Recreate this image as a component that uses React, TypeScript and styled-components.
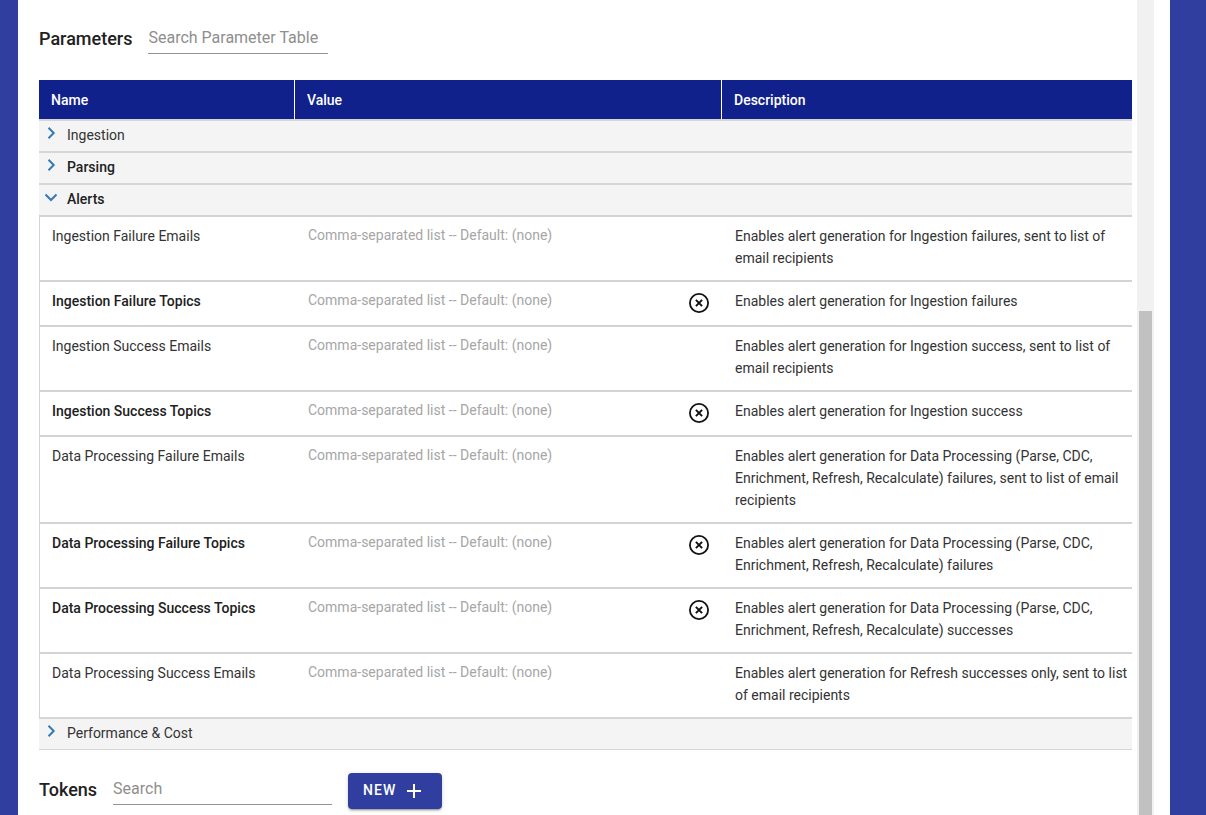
import React, { useState } from 'react';
import styled, { createGlobalStyle } from 'styled-components';

const GlobalStyle = createGlobalStyle`
  *, *::before, *::after { box-sizing: border-box; }
  body {
    margin: 0;
    background: #303f9f;
    color: #212121;
    font-family: Roboto, "Liberation Sans", sans-serif;
    font-size: 14px;
    line-height: 22px;
  }
  button, input { font: inherit; color: inherit; }
`;

const Page = styled.div`
  display: flex;
  min-height: 100vh;
  padding: 0 36px 0 18px;
`;

const Panel = styled.div`
  display: flex;
  flex: 1;
  min-width: 0;
  padding-right: 16px;
  background: #fff;
`;

const Content = styled.main`
  flex: 1;
  min-width: 0;
  padding: 20px 5px 6px 21px;
`;

const ScrollTrack = styled.div`
  display: flex;
  flex-direction: column;
  width: 17px;
  padding: 311px 2px 0;
  background: #f1f1f1;
`;

const ScrollThumb = styled.div`
  flex: 1;
  background: #c1c1c1;
`;

const SectionBar = styled.div`
  display: flex;
  align-items: flex-start;
  gap: 16px;
`;

const Title = styled.h2`
  margin: 0;
  padding-top: 7px;
  font-size: 18px;
  line-height: 24px;
  font-weight: 500;
`;

const SearchField = styled.input<{ $width: number }>`
  width: ${(p) => p.$width}px;
  height: 34px;
  padding: 2px 0 0;
  border: 0;
  border-bottom: 1px solid #949494;
  outline: 0;
  background: transparent;
  font-size: 16px;
  font-weight: 400;
  &::placeholder { color: #8e8e8e; opacity: 1; }
`;

const Table = styled.table`
  width: 100%;
  margin: 26px 0 21px;
  table-layout: fixed;
  border-collapse: separate;
  border-spacing: 0;
`;

const NameCol = styled.col`
  width: 255px;
`;

const DescriptionCol = styled.col`
  width: 411px;
`;

const HeadCell = styled.th`
  height: 39px;
  padding: 0 12px;
  background: #11218c;
  color: #fff;
  font-weight: 500;
  text-align: left;
  & + & { border-left: 1px solid #fff; }
`;

const GroupCell = styled.td`
  height: 32px;
  padding: 0;
  border-top: 2px solid #d6d6d6;
  background: #f4f4f4;
  tr:last-child > & { border-bottom: 1px solid #d6d6d6; height: 33px; }
`;

const GroupToggle = styled.button<{ $strong: boolean }>`
  display: flex;
  align-items: center;
  gap: 9px;
  width: 100%;
  height: 30px;
  padding: 0 6px 2px 5px;
  border: 0;
  background: transparent;
  color: ${(p) => (p.$strong ? '#212121' : '#333')};
  font-weight: ${(p) => (p.$strong ? 500 : 400)};
  text-align: left;
  cursor: pointer;
`;

const ChevronIcon = styled.svg`
  width: 14px;
  height: 14px;
  margin-bottom: 4px;
  fill: none;
  stroke: #337ab7;
  stroke-width: 2;
`;

const Cell = styled.td`
  padding: 8px 0 11px 13px;
  border-top: 2px solid #d3d3d3;
  vertical-align: top;
  color: #333;
  font-weight: 400;
`;

const NameCell = styled(Cell)<{ $strong: boolean }>`
  padding-left: 12px;
  border-left: 1px solid #d3d3d3;
  color: ${(p) => (p.$strong ? '#212121' : '#333')};
  font-weight: ${(p) => (p.$strong ? 500 : 400)};
`;

const ValueBox = styled.div`
  display: flex;
  justify-content: space-between;
  padding: 0 10px 0 1px;
`;

const ValueInput = styled.input`
  flex: 1;
  min-width: 0;
  height: 20px;
  padding: 0;
  border: 0;
  outline: 0;
  background: transparent;
  &::placeholder { color: #a6a6a6; opacity: 1; }
`;

const ClearButton = styled.button`
  display: flex;
  width: 24px;
  height: 24px;
  padding: 1px;
  border: 0;
  background: transparent;
  color: #111;
  cursor: pointer;
`;

const Description = styled(Cell)`
  padding-left: 14px;
`;

const NewButton = styled.button`
  display: flex;
  align-items: center;
  gap: 9px;
  height: 36px;
  margin-top: 2px;
  padding: 0 19px 2px 15px;
  border: 0;
  border-radius: 4px;
  background: #303f9f;
  box-shadow: 0 3px 1px -2px rgba(0, 0, 0, 0.2), 0 2px 2px rgba(0, 0, 0, 0.14), 0 1px 5px rgba(0, 0, 0, 0.12);
  color: #fff;
  font-weight: 500;
  letter-spacing: 1px;
  cursor: pointer;
`;

type Param = { name: string; description: string; set?: boolean };
type Group = { name: string; strong?: boolean; params: Param[] };

const groups: Group[] = [
  { name: 'Ingestion', params: [] },
  { name: 'Parsing', strong: true, params: [] },
  {
    name: 'Alerts',
    strong: true,
    params: [
      { name: 'Ingestion Failure Emails', description: 'Enables alert generation for Ingestion failures, sent to list of email recipients' },
      { name: 'Ingestion Failure Topics', description: 'Enables alert generation for Ingestion failures', set: true },
      { name: 'Ingestion Success Emails', description: 'Enables alert generation for Ingestion success, sent to list of email recipients' },
      { name: 'Ingestion Success Topics', description: 'Enables alert generation for Ingestion success', set: true },
      { name: 'Data Processing Failure Emails', description: 'Enables alert generation for Data Processing (Parse, CDC, Enrichment, Refresh, Recalculate) failures, sent to list of email recipients' },
      { name: 'Data Processing Failure Topics', description: 'Enables alert generation for Data Processing (Parse, CDC, Enrichment, Refresh, Recalculate) failures', set: true },
      { name: 'Data Processing Success Topics', description: 'Enables alert generation for Data Processing (Parse, CDC, Enrichment, Refresh, Recalculate) successes', set: true },
      { name: 'Data Processing Success Emails', description: 'Enables alert generation for Refresh successes only, sent to list of email recipients' },
    ],
  },
  { name: 'Performance & Cost', params: [] },
];

function Chevron({ open }: { open: boolean }) {
  return (
    <ChevronIcon viewBox="0 0 14 14" aria-hidden="true">
      <path d={open ? 'M1.5 4.5 7 10l5.5-5.5' : 'M4.5 1.8 9.7 7l-5.2 5.2'} />
    </ChevronIcon>
  );
}

function ParamRow({ name, description, set = false }: Param) {
  const [value, setValue] = useState('');
  return (
    <tr>
      <NameCell $strong={set}>{name}</NameCell>
      <Cell>
        <ValueBox>
          <ValueInput
            aria-label={name}
            placeholder="Comma-separated list -- Default: (none)"
            value={value}
            onChange={(e) => setValue(e.target.value)}
          />
          {set && (
            <ClearButton type="button" aria-label={`Clear ${name}`} onClick={() => setValue('')}>
              <svg width="22" height="22" viewBox="0 0 22 22" fill="none" stroke="currentColor" aria-hidden="true">
                <circle cx="11" cy="12" r="9.1" strokeWidth="1.8" />
                <path d="m7.9 8.9 6.2 6.2m0-6.2-6.2 6.2" strokeWidth="2" />
              </svg>
            </ClearButton>
          )}
        </ValueBox>
      </Cell>
      <Description>{description}</Description>
    </tr>
  );
}

export default function App() {
  const [open, setOpen] = useState<string[]>(['Alerts']);
  const toggle = (name: string) =>
    setOpen((list) => (list.includes(name) ? list.filter((n) => n !== name) : [...list, name]));

  return (
    <>
      <GlobalStyle />
      <Page>
        <Panel>
          <Content>
            <SectionBar>
              <Title>Parameters</Title>
              <SearchField $width={180} type="text" aria-label="Search Parameter Table" placeholder="Search Parameter Table" />
            </SectionBar>
            <Table>
              <colgroup>
                <NameCol />
                <col />
                <DescriptionCol />
              </colgroup>
              <thead>
                <tr>
                  <HeadCell scope="col">Name</HeadCell>
                  <HeadCell scope="col">Value</HeadCell>
                  <HeadCell scope="col">Description</HeadCell>
                </tr>
              </thead>
              <tbody>
                {groups.map((g) => {
                  const isOpen = open.includes(g.name);
                  return (
                    <React.Fragment key={g.name}>
                      <tr>
                        <GroupCell colSpan={3}>
                          <GroupToggle type="button" $strong={!!g.strong} aria-expanded={isOpen} onClick={() => toggle(g.name)}>
                            <Chevron open={isOpen} />
                            {g.name}
                          </GroupToggle>
                        </GroupCell>
                      </tr>
                      {isOpen && g.params.map((p) => <ParamRow key={p.name} {...p} />)}
                    </React.Fragment>
                  );
                })}
              </tbody>
            </Table>
            <SectionBar>
              <Title>Tokens</Title>
              <SearchField $width={219} type="text" aria-label="Search tokens" placeholder="Search" />
              <NewButton type="button">
                NEW
                <svg width="18" height="18" viewBox="0 0 18 18" stroke="currentColor" strokeWidth="2" aria-hidden="true">
                  <path d="M9 3v14M2 10h14" />
                </svg>
              </NewButton>
            </SectionBar>
          </Content>
          <ScrollTrack aria-hidden="true">
            <ScrollThumb />
          </ScrollTrack>
        </Panel>
      </Page>
    </>
  );
}
